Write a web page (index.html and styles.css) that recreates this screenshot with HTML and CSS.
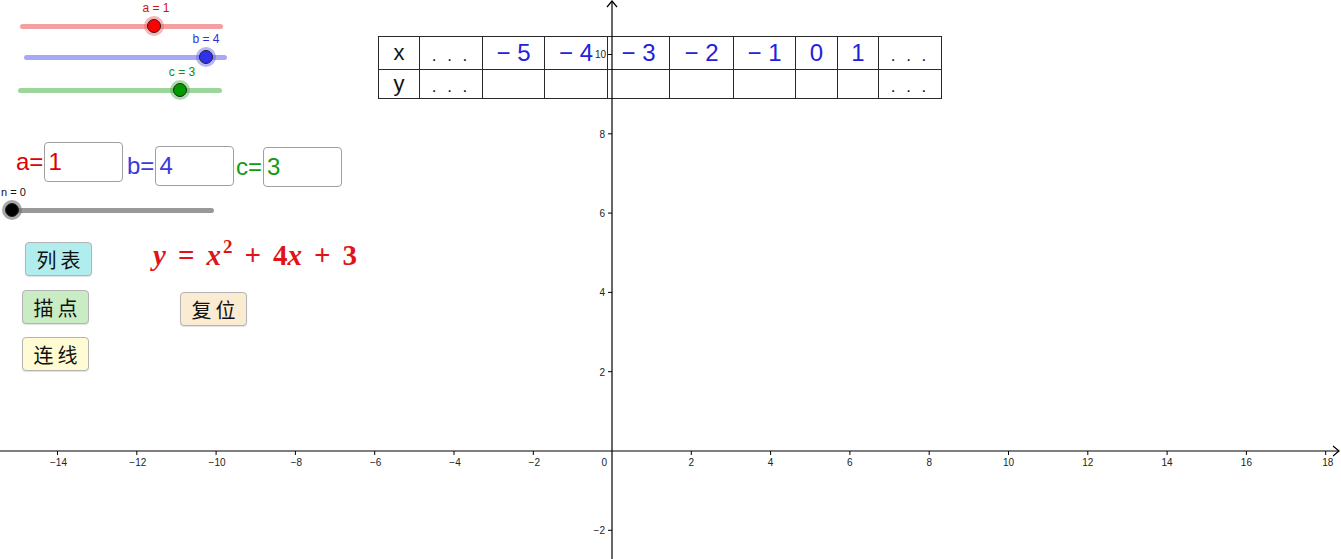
FILE: index.html
```html
<!DOCTYPE html>
<html lang="zh">
<head>
<meta charset="utf-8">
<title>二次函数</title>
<link rel="stylesheet" href="styles.css">
</head>
<body>
<div class="applet">

  <div class="slider slider-a">
    <span class="slider-label">a = 1</span>
    <div class="track"></div>
    <div class="knob"></div>
  </div>
  <div class="slider slider-b">
    <span class="slider-label">b = 4</span>
    <div class="track"></div>
    <div class="knob"></div>
  </div>
  <div class="slider slider-c">
    <span class="slider-label">c = 3</span>
    <div class="track"></div>
    <div class="knob"></div>
  </div>

  <div class="field field-a"><span class="field-label">a=</span><span class="field-box">1</span></div>
  <div class="field field-b"><span class="field-label">b=</span><span class="field-box">4</span></div>
  <div class="field field-c"><span class="field-label">c=</span><span class="field-box">3</span></div>

  <div class="slider slider-n">
    <span class="slider-label">n = 0</span>
    <div class="track"></div>
    <div class="knob"></div>
  </div>

  <button class="btn btn-list">列表</button>
  <button class="btn btn-plot">描点</button>
  <button class="btn btn-line">连线</button>
  <button class="btn btn-reset">复位</button>

  <div class="formula"><span class="v">y</span><span class="op">=</span><span class="v">x</span><sup class="num">2</sup><span class="op">+</span><span class="num">4</span><span class="v">x</span><span class="op">+</span><span class="num">3</span></div>

  <div class="table">
    <div class="cell head">x</div>
    <div class="cell dots">. . .</div>
    <div class="cell val">− 5</div>
    <div class="cell val">− 4</div>
    <div class="cell val">− 3</div>
    <div class="cell val">− 2</div>
    <div class="cell val">− 1</div>
    <div class="cell val">0</div>
    <div class="cell val">1</div>
    <div class="cell dots">. . .</div>
    <div class="cell head">y</div>
    <div class="cell dots">. . .</div>
    <div class="cell"></div>
    <div class="cell"></div>
    <div class="cell"></div>
    <div class="cell"></div>
    <div class="cell"></div>
    <div class="cell"></div>
    <div class="cell"></div>
    <div class="cell dots">. . .</div>
  </div>

  <svg class="axes" width="1341" height="559" viewBox="0 0 1341 559">
    <g class="axis-lines">
      <line x1="0" y1="451" x2="1339" y2="451"/>
      <polyline points="1333,446 1339,451 1333,456"/>
      <line x1="612" y1="1" x2="612" y2="559"/>
      <polyline points="607,7 612,1 617,7"/>
    </g>
    <g class="ticks">
      <line x1="57.5" y1="451" x2="57.5" y2="455"/>
      <line x1="136.8" y1="451" x2="136.8" y2="455"/>
      <line x1="216.1" y1="451" x2="216.1" y2="455"/>
      <line x1="295.4" y1="451" x2="295.4" y2="455"/>
      <line x1="374.7" y1="451" x2="374.7" y2="455"/>
      <line x1="454" y1="451" x2="454" y2="455"/>
      <line x1="533.3" y1="451" x2="533.3" y2="455"/>
      <line x1="691.3" y1="451" x2="691.3" y2="455"/>
      <line x1="770.6" y1="451" x2="770.6" y2="455"/>
      <line x1="849.9" y1="451" x2="849.9" y2="455"/>
      <line x1="929.2" y1="451" x2="929.2" y2="455"/>
      <line x1="1008.5" y1="451" x2="1008.5" y2="455"/>
      <line x1="1087.8" y1="451" x2="1087.8" y2="455"/>
      <line x1="1167.1" y1="451" x2="1167.1" y2="455"/>
      <line x1="1246.4" y1="451" x2="1246.4" y2="455"/>
      <line x1="1325.7" y1="451" x2="1325.7" y2="455"/>
      <line x1="608" y1="371.7" x2="612" y2="371.7"/>
      <line x1="608" y1="292.4" x2="612" y2="292.4"/>
      <line x1="608" y1="213.1" x2="612" y2="213.1"/>
      <line x1="608" y1="133.8" x2="612" y2="133.8"/>
      <line x1="608" y1="54.5" x2="612" y2="54.5"/>
      <line x1="608" y1="530.3" x2="612" y2="530.3"/>
    </g>
    <g class="xlabels">
      <text x="58.5" y="466">−14</text>
      <text x="137.8" y="466">−12</text>
      <text x="217.1" y="466">−10</text>
      <text x="296.4" y="466">−8</text>
      <text x="375.7" y="466">−6</text>
      <text x="455" y="466">−4</text>
      <text x="534.3" y="466">−2</text>
      <text x="691.3" y="466">2</text>
      <text x="770.6" y="466">4</text>
      <text x="849.9" y="466">6</text>
      <text x="929.2" y="466">8</text>
      <text x="1008.5" y="466">10</text>
      <text x="1087.8" y="466">12</text>
      <text x="1167.1" y="466">14</text>
      <text x="1246.4" y="466">16</text>
      <text x="1327.7" y="466">18</text>
    </g>
    <g class="ylabels">
      <text x="607" y="466">0</text>
      <text x="605" y="375.5">2</text>
      <text x="605" y="296.2">4</text>
      <text x="605" y="216.9">6</text>
      <text x="605" y="137.6">8</text>
      <text x="606" y="58.3">10</text>
      <text x="605" y="534.1">−2</text>
    </g>
  </svg>
</div>
</body>
</html>
```

FILE: styles.css
```css
html, body {
  margin: 0;
  padding: 0;
  background: #ffffff;
}

.applet {
  position: relative;
  width: 1341px;
  height: 559px;
  overflow: hidden;
  background: #ffffff;
  font-family: "Liberation Sans", Arial, sans-serif;
}

/* ---------- sliders ---------- */
.slider {
  position: absolute;
  height: 20px;
}
.slider .track {
  position: absolute;
  left: 0;
  right: 0;
  top: 7px;
  height: 5px;
  border-radius: 3px;
}
.slider .knob {
  position: absolute;
  top: 2px;
  width: 12px;
  height: 12px;
  margin-left: -7px;
  border-radius: 50%;
  border: 1px solid #222;
}
.slider-label {
  position: absolute;
  top: -16px;
  font-size: 12px;
  line-height: 14px;
  white-space: nowrap;
  transform: translateX(-50%);
}

.slider-a { left: 20px; top: 17px; width: 203px; }
.slider-a .track { background: #f5a0a0; }
.slider-a .knob { left: 134px; background: #ff0000; box-shadow: 0 0 0 3px rgba(240, 90, 90, 0.45); }
.slider-a .slider-label { left: 136px; color: #d01010; }

.slider-b { left: 24px; top: 48px; width: 203px; }
.slider-b .track { background: #a8a8f4; }
.slider-b .knob { left: 182px; background: #3030f0; box-shadow: 0 0 0 3px rgba(90, 90, 240, 0.45); }
.slider-b .slider-label { left: 182px; color: #3030d0; }

.slider-c { left: 18px; top: 81px; width: 204px; }
.slider-c .track { background: #9dd69d; }
.slider-c .knob { left: 162px; background: #009a00; box-shadow: 0 0 0 3px rgba(70, 170, 70, 0.45); }
.slider-c .slider-label { left: 164px; color: #108a10; }

.slider-n { left: 12px; top: 201px; width: 202px; }
.slider-n .track { background: #999999; }
.slider-n .knob { left: 0; background: #000000; box-shadow: 0 0 0 3px rgba(110, 110, 110, 0.6); }
.slider-n .slider-label { left: -11px; top: -16px; font-size: 11px; color: #111; transform: none; }

/* ---------- input fields ---------- */
.field {
  position: absolute;
  display: flex;
  align-items: center;
  font-size: 24px;
  line-height: 1;
}
.field-box {
  box-sizing: border-box;
  display: flex;
  align-items: center;
  width: 79px;
  height: 40px;
  border: 1px solid #a0a0a0;
  border-radius: 4px;
  padding: 0 0 0 3px;
  margin-left: 1px;
}
.field-a { left: 16px; top: 142px; color: #e00000; }
.field-b { left: 127px; top: 146px; color: #3a3ae0; }
.field-c { left: 236px; top: 147px; color: #129a12; }

/* ---------- buttons ---------- */
.btn {
  position: absolute;
  box-sizing: border-box;
  width: 67px;
  height: 34px;
  padding: 0 0 0 4px;
  border: 1px solid #b4b4b4;
  border-radius: 4px;
  font-family: "Noto Sans CJK SC", sans-serif;
  font-size: 20px;
  letter-spacing: 4px;
  color: #111;
  box-shadow: 0 1px 1px rgba(0, 0, 0, 0.12);
}
.btn-list  { left: 25px;  top: 242px; background: #b1eded; }
.btn-plot  { left: 22px;  top: 290px; background: #c9ecc4; }
.btn-line  { left: 22px;  top: 337px; background: #fffbd2; }
.btn-reset { left: 180px; top: 292px; background: #fcebd3; }

/* ---------- formula ---------- */
.formula {
  position: absolute;
  left: 153px;
  top: 236px;
  color: #e01414;
  font-family: "Liberation Serif", "Times New Roman", serif;
  font-weight: bold;
  font-size: 29px;
  white-space: nowrap;
}
.formula .v { font-style: italic; }
.formula .op { margin: 0 12px; }
.formula .num { font-style: normal; }
.formula sup { font-size: 19px; vertical-align: 12px; margin-left: 2px; }

/* ---------- table ---------- */
.table {
  position: absolute;
  left: 378px;
  top: 36px;
  display: grid;
  grid-template-columns: 40px 62px 61px 62px 61px 63px 61px 41px 40px 62px;
  grid-template-rows: 32px 28px;
  gap: 1px;
  padding: 1px;
  background: #2a2a2a;
}
.cell {
  background: #ffffff;
  display: flex;
  align-items: center;
  justify-content: center;
  font-size: 22px;
  color: #111;
}
.cell.val {
  color: #2222dd;
  font-size: 24px;
}
.cell.dots {
  font-size: 17px;
  letter-spacing: 3px;
  padding-top: 6px;
}
.cell.head { font-size: 22px; }

/* ---------- axes ---------- */
.axes {
  position: absolute;
  left: 0;
  top: 0;
  pointer-events: none;
}
.axis-lines line,
.axis-lines polyline {
  stroke: #000;
  stroke-width: 1.2;
  fill: none;
}
.ticks line {
  stroke: #000;
  stroke-width: 1;
}
.xlabels text {
  font-family: "Liberation Sans", Arial, sans-serif;
  font-size: 10px;
  fill: #222;
  text-anchor: middle;
}
.ylabels text {
  font-family: "Liberation Sans", Arial, sans-serif;
  font-size: 10px;
  fill: #222;
  text-anchor: end;
}
```
